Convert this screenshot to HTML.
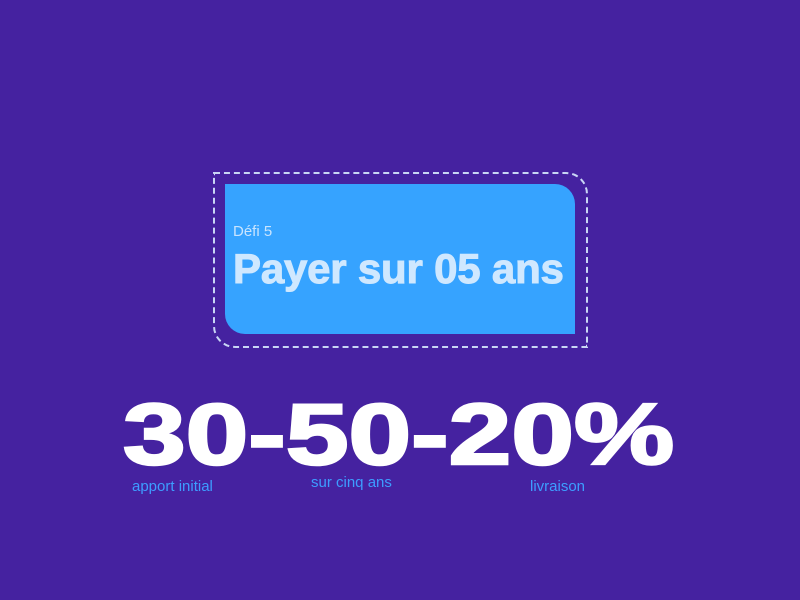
<!DOCTYPE html>
<html><head><meta charset="utf-8"><style>
html,body{margin:0;padding:0}
body{width:800px;height:600px;background:#4522a0;position:relative;overflow:hidden;font-family:"Liberation Sans",sans-serif}
.dash{position:absolute;left:213px;top:172px;width:371px;height:172px;border:2px dashed #c9d6f5;border-radius:0 22px 0 22px;box-sizing:content-box}
.box{position:absolute;left:225px;top:184px;width:350px;height:150px;background:#36a3ff;border-radius:0 20px 0 20px}
.sm{position:absolute;left:233px;top:223px;font-size:15px;color:#c8e4ff}
.ttl{position:absolute;left:233px;top:245px;font-size:42px;font-weight:bold;letter-spacing:-0.2px;color:#cfe8ff;white-space:nowrap;-webkit-text-stroke:1px #cfe8ff}
.big{position:absolute;left:123px;top:388px;font-size:86px;font-weight:bold;color:#fff;white-space:nowrap;transform-origin:0 0;transform:scaleX(1.31);line-height:1.1;-webkit-text-stroke:2.5px #fff}
.lb{position:absolute;font-size:15px;color:#3d9dff}
</style></head><body>
<div class="dash"></div>
<div class="box"></div>
<div class="sm">Défi 5</div>
<div class="ttl">Payer sur 05 ans</div>
<div class="big">30-50-20%</div>
<div class="lb" style="left:132px;top:478px">apport initial</div>
<div class="lb" style="left:311px;top:474px">sur cinq ans</div>
<div class="lb" style="left:530px;top:478px">livraison</div>
</body></html>
